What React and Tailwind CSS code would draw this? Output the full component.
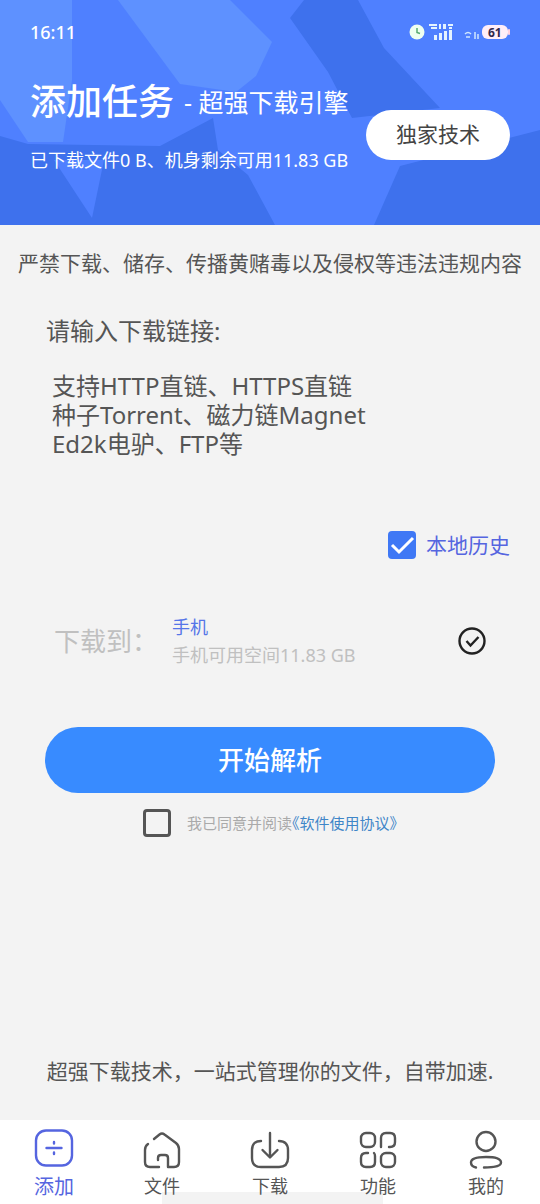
const fontStack = "font-['Noto_Sans','Noto_Sans_CJK_SC',sans-serif]";

const navItems = [
  { label: '添加', icon: AddIcon, active: true },
  { label: '文件', icon: HomeIcon },
  { label: '下载', icon: DownloadIcon },
  { label: '功能', icon: GridIcon },
  { label: '我的', icon: UserIcon },
];

function NavSvg({ children }) {
  return (
    <svg
      viewBox="0 0 40 40"
      className="size-10"
      fill="none"
      stroke="currentColor"
      strokeWidth="2.4"
      strokeLinecap="round"
      strokeLinejoin="round"
      aria-hidden="true"
    >
      {children}
    </svg>
  );
}

function AddIcon() {
  return (
    <NavSvg>
      <rect x="2" y="1.5" width="36" height="35" rx="10" />
      <path d="M12.5 19h15M20 13v1.5M20 23.5v1.5" />
    </NavSvg>
  );
}

function HomeIcon() {
  return (
    <NavSvg>
      <path d="M12 10l5.5-4.5q2.500-2 5 0L34 14q3 2.500 3 6v13q0 5-5 5h-6V29q0-3-3-3h-4q-3 0-3 3v2" />
      <path d="M6 15q-3 2-3 6v12q0 5 5 5h9" />
    </NavSvg>
  );
}

function DownloadIcon() {
  return (
    <NavSvg>
      <path d="M11 12Q2 12 2 21v8q0 9 9 9h18q9 0 9-9v-8q0-9-9-9" />
      <path d="M20 4v24M12.5 21l7.5 7.5 7.5-7.5" />
    </NavSvg>
  );
}

function GridIcon() {
  return (
    <NavSvg>
      <rect x="3" y="4" width="14" height="14" rx="5" />
      <path d="M23 18V9q0-5 5-5h4q5 0 5 5v4q0 5-5 5h-1" />
      <path d="M16 24q1 1 1 3v6q0 5-5 5H8q-5 0-5-5v-4q0-5 5-5h2" />
      <rect x="23" y="24" width="14" height="14" rx="5" />
    </NavSvg>
  );
}

function UserIcon() {
  return (
    <NavSvg>
      <circle cx="20" cy="12.5" r="9.5" />
      <path d="M10 38.500q-5-1-5-5 0-5.500 15-5.500t15 5.500q0 5-17 5" />
    </NavSvg>
  );
}

// low-poly backdrop behind the header
function HeaderBackdrop() {
  return (
    <svg
      viewBox="0 0 540 225"
      preserveAspectRatio="none"
      className="absolute inset-0 h-full w-full"
      aria-hidden="true"
    >
      <rect width="540" height="225" fill="#4f80ff" />
      <path d="M0 0H72V80L63 142H28L0 100Z" fill="#5e91ff" />
      <path d="M118 0H230L272 42L256 76L236 92L180 84Z" fill="#5e91ff" />
      <path d="M0 136L28 144L160 146L213 118L218 150L248 175L275 225H0Z" fill="#3e71ed" />
      <path d="M54 160H104L92 218Z" fill="#4f80ff" />
      <path d="M304 0H358L384 48L440 108L352 118L328 72L290 18Z" fill="#3e71ed" />
      <path d="M374 225L400 166L540 130V225Z" fill="#3e71ed" />
    </svg>
  );
}

function StatusBar() {
  return (
    <div className="flex items-center justify-between">
      <span className="text-lg leading-6 font-medium">16:11</span>
      <svg viewBox="0 0 102 18" className="h-[18px] w-[102px]" aria-hidden="true">
        <circle cx="9" cy="9" r="7.500" fill="#effff0" />
        <path d="M9 5v4.500l3 1" fill="none" stroke="#55aa70" strokeWidth="1.500" />
        <g fill="#e4f3ff">
          <path d="M21 1h8v2h-8zM23 4h6v2h-6zM31 1h2v5h-2zM35 1h3v5h-3zM40 1h5v2h-5zM41 4h3v2h-3z" />
          <path d="M26 12h3v5h-3zM31 10h3v7h-3zM36 8h3v9h-3zM41 7h3v10h-3z" />
        </g>
        <g fill="none" stroke="#cfe6ff" strokeWidth="1.500">
          <path d="M57 11q3-3 6 0M58 14h4M67 9v7M70 11v5" />
        </g>
        <rect x="74" y="2" width="26" height="14" rx="6" fill="#ffeef8" />
        <rect x="100" y="6" width="2" height="6" rx="1" fill="#ffd0e0" />
        <text x="80" y="14" fontSize="12" fontWeight="700" fill="#33284c">61</text>
      </svg>
    </div>
  );
}

function Header() {
  return (
    <header className="relative text-white">
      <HeaderBackdrop />
      <div className="relative px-[30px] pt-5 pb-[53px]">
        <StatusBar />
        <div className="flex items-end justify-between pt-8">
          <div className="whitespace-nowrap">
            <h1 className="flex items-center gap-2.5 leading-[52px]">
              <span className="text-4xl leading-[52px] font-medium">添加任务</span>
              <span className="text-[25px]">- 超强下载引擎</span>
            </h1>
            <p className="pt-5 text-lg leading-6">已下载文件0 B、机身剩余可用11.83 GB</p>
          </div>
          <button
            type="button"
            className="mb-3 -ml-4 h-[50px] w-36 shrink-0 rounded-full bg-white text-[21px] text-[#444]"
          >
            独家技术
          </button>
        </div>
      </div>
    </header>
  );
}

function BottomNav() {
  return (
    <nav className="relative bg-white">
      {/* system gesture bar */}
      <div className="absolute bottom-0 left-[30%] h-3 w-[41%] bg-[#f3f3f3]" />
      <div className="relative grid grid-cols-5 pt-[9px]">
        {navItems.map(({ label, icon: Icon, active }) => (
          <a
            key={label}
            href="#"
            className={
              active
                ? 'flex flex-col items-center text-xl leading-[35px] text-[#5565e0]'
                : 'flex flex-col items-center text-lg leading-[35px] text-[#555]'
            }
          >
            <Icon />
            {label}
          </a>
        ))}
      </div>
    </nav>
  );
}

export default function App() {
  return (
    <div className={`flex min-h-screen flex-col bg-[#f3f3f3] text-[#555] ${fontStack}`}>
      <Header />
      <main className="flex grow flex-col">
        <p className="pt-6 text-center text-[21px] leading-7 whitespace-nowrap">
          严禁下载、储存、传播黄赌毒以及侵权等违法违规内容
        </p>

        <div className="px-[46px] pt-[38px]">
          <label htmlFor="links" className="block text-2xl leading-8">
            请输入下载链接:
          </label>
          <textarea
            id="links"
            rows={4}
            className="mt-6 block w-full resize-none bg-transparent px-1.5 text-2xl leading-[29px] outline-none placeholder:text-[#555]"
            placeholder={'支持HTTP直链、HTTPS直链\n种子Torrent、磁力链Magnet\nEd2k电驴、FTP等'}
          />
        </div>

        <label className="mt-[42px] flex items-center justify-end gap-2.5 pr-[30px] text-[21px] leading-8 text-[#5565e0]">
          <span className="grid">
            <input
              type="checkbox"
              defaultChecked
              className="col-start-1 row-start-1 size-7 appearance-none rounded-sm bg-[#3f78f5]"
            />
            <svg
              viewBox="0 0 28 28"
              className="pointer-events-none col-start-1 row-start-1 size-7"
              fill="none"
              stroke="#fff"
              strokeWidth="3"
              aria-hidden="true"
            >
              <path d="M4 14l7 7L25 7" />
            </svg>
          </span>
          本地历史
        </label>

        <div className="mt-[52px] flex items-center px-[54px]">
          <span className="w-[118px] text-[26px] text-[#c0c0c0]">下载到：</span>
          <div className="grow">
            <p className="text-lg leading-7 text-[#5575e8]">手机</p>
            <p className="text-lg leading-7 text-[#c0c0c0]">手机可用空间11.83 GB</p>
          </div>
          <svg
            viewBox="0 0 28 28"
            className="size-7"
            fill="none"
            stroke="#222"
            strokeWidth="2.4"
            aria-hidden="true"
          >
            <circle cx="14" cy="14" r="12.5" />
            <path d="M8.500 14l4 4.500 8-8.500" />
          </svg>
        </div>

        <div className="px-[45px] pt-[58px]">
          <button
            type="button"
            className="h-[66px] w-full rounded-[33px] bg-[#388bff] text-[26px] font-medium text-white"
          >
            开始解析
          </button>
        </div>

        <div className="mt-4 flex items-center justify-center gap-4 text-[15px]">
          <input
            id="agree"
            type="checkbox"
            className="size-7 appearance-none rounded-sm border-3 border-[#555]"
          />
          <p className="[font-feature-settings:'halt']">
            <label htmlFor="agree" className="text-[#aaa]">
              我已同意并阅读
            </label>
            <a href="#" className="text-[#3f86c8]">
              《软件使用协议》
            </a>
          </p>
        </div>

        <p className="mt-auto pb-[35px] text-center text-[21px] leading-7 whitespace-nowrap">
          超强下载技术，一站式管理你的文件，自带加速.
        </p>
      </main>
      <BottomNav />
    </div>
  );
}
